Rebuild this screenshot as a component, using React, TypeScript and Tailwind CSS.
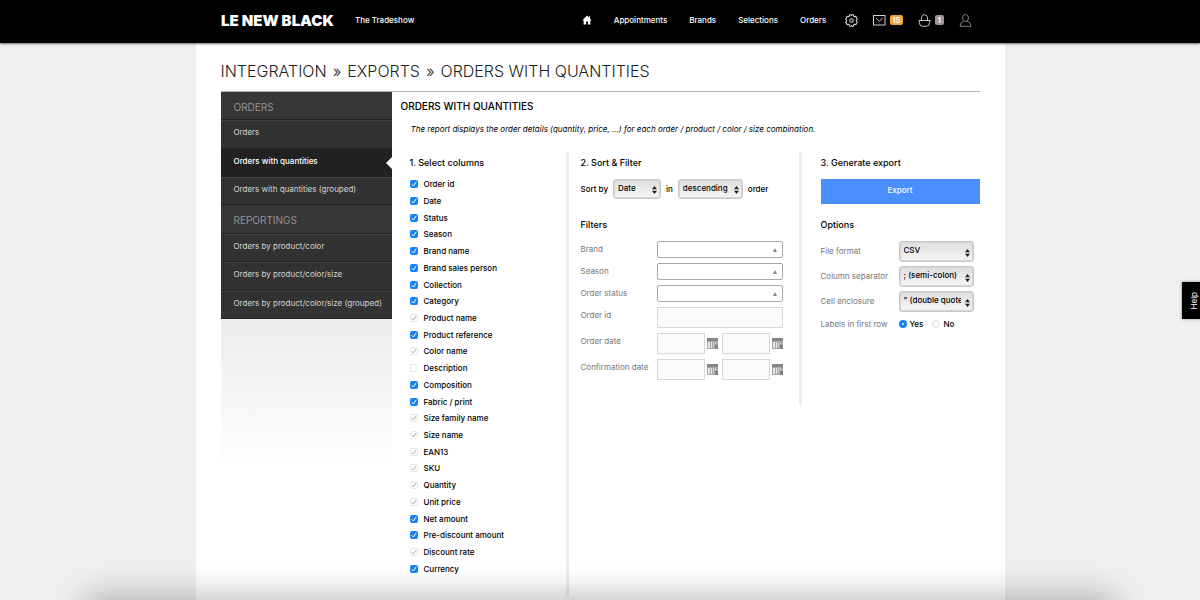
import type { ReactNode } from "react";

type Column = { label: string; state: "on" | "off" | "locked" };

const columns: Column[] = [
  { label: "Order id", state: "on" },
  { label: "Date", state: "on" },
  { label: "Status", state: "on" },
  { label: "Season", state: "on" },
  { label: "Brand name", state: "on" },
  { label: "Brand sales person", state: "on" },
  { label: "Collection", state: "on" },
  { label: "Category", state: "on" },
  { label: "Product name", state: "locked" },
  { label: "Product reference", state: "on" },
  { label: "Color name", state: "locked" },
  { label: "Description", state: "off" },
  { label: "Composition", state: "on" },
  { label: "Fabric / print", state: "on" },
  { label: "Size family name", state: "locked" },
  { label: "Size name", state: "locked" },
  { label: "EAN13", state: "locked" },
  { label: "SKU", state: "locked" },
  { label: "Quantity", state: "locked" },
  { label: "Unit price", state: "locked" },
  { label: "Net amount", state: "on" },
  { label: "Pre-discount amount", state: "on" },
  { label: "Discount rate", state: "locked" },
  { label: "Currency", state: "on" },
];

function HomeIcon() {
  return (
    <svg viewBox="0 0 10 10" className="h-[10px] w-[10px]" fill="#fff" aria-hidden="true">
      <path d="M5 .6 .4 5.2h1.2v4.2h2.5V6.6h1.8v2.8h2.5V5.2h1.2L8 3.6V1.2H6.9v1.3z" />
    </svg>
  );
}

function GearIcon() {
  return (
    <svg viewBox="0 0 24 24" className="h-[13px] w-[13px]" fill="none" stroke="#d0d0d0" strokeWidth="2" strokeLinejoin="round" aria-hidden="true">
      <circle cx="12" cy="12" r="3.2" />
      <path d="M8.500 1.500h2.300q1.200 2.500 2.400 0h2.300l1.200 3.500 3.300-.6 2.700 4.700-2 2.900 2 2.900-2.700 4.700-3.300-.6-1.200 3.500h-2.300q-1.200-2.500-2.400 0H8.500L7.300 19l-3.300.6-2.700-4.700 2-2.900-2-2.900L4 4.400l3.300.6z" />
    </svg>
  );
}

function MailIcon() {
  return (
    <svg viewBox="0 0 13 11" className="h-[11px] w-[13px]" fill="none" stroke="#d0d0d0" aria-hidden="true">
      <rect x=".5" y=".5" width="11.500" height="9.500" />
      <path d="M3 3l3.300 3.400L9.600 3" />
    </svg>
  );
}

function BasketIcon() {
  return (
    <svg viewBox="0 0 13 13" className="h-[13px] w-[13px]" fill="none" stroke="#c4c4c4" aria-hidden="true">
      <path d="M.5 6.500h12M1.300 6.500v2q0 3.800 3.500 3.800h3.400q3.500 0 3.500-3.800v-2" />
      <path d="M3.300 6.500q0-5.800 3.200-5.800t3.200 5.800" />
    </svg>
  );
}

function UserIcon() {
  return (
    <svg viewBox="0 0 13 13" className="h-[13px] w-[13px]" fill="none" stroke="#7d7d7d" aria-hidden="true">
      <ellipse cx="6.500" cy="4" rx="3" ry="3.500" />
      <path d="M4.600 7.500Q1 8.200 1 12.300h11Q12 8.200 8.400 7.500" />
    </svg>
  );
}

function CalendarIcon() {
  return (
    <svg viewBox="0 0 11 11" className="h-[11px] w-[11px]" aria-hidden="true">
      <rect x="0" y="0" width="11" height="11" fill="#a8a8a8" />
      <rect x="0" y="0" width="11" height="3" fill="#858585" />
      <path d="M1 4h2v6H1zM4 4h1v6H4z" fill="#e6e6e6" />
      <path d="M6 4h1v5H6zM8 4h1v2H8z" fill="#cfcfcf" />
      <rect x="8" y="7" width="3" height="4" fill="#808080" />
    </svg>
  );
}

function NavLink({ children }: { children: ReactNode }) {
  return <a href="#" className="text-[8px] leading-4 font-medium text-white">{children}</a>;
}

function SideSection({ title, items, active }: { title: string; items: string[]; active?: string }) {
  return (
    <>
      <h2 className="flex items-center border-b border-[#242424] bg-[#373737] pt-0.5 pl-[13px] text-[10px] leading-4 text-[#929292]">{title}</h2>
      {items.map((item) => (
        <a
          key={item}
          href="#"
          className={
            item === active
              ? "relative flex items-center bg-[#212121] pb-1 pl-[13px] text-[8px] leading-4 font-medium text-white"
              : "flex items-center border-t border-b border-t-[#434343] border-b-[#242424] bg-[#323232] pb-1 pl-[13px] text-[8px] leading-4 whitespace-nowrap text-[#d2d2d2]"
          }
        >
          {item}
          {item === active && (
            <svg viewBox="0 0 6 12" className="absolute top-2 right-0 h-3 w-1.5" fill="#fff" aria-hidden="true">
              <path d="M6 0v12L0 6z" />
            </svg>
          )}
        </a>
      ))}
    </>
  );
}

function Check({ column, id }: { column: Column; id: string }) {
  const on = column.state === "on";
  return (
    <div className="flex items-center gap-1.5">
      <span className="grid size-2 shrink-0 place-items-center">
        <input
          id={id}
          type="checkbox"
          defaultChecked={column.state !== "off"}
          disabled={column.state === "locked"}
          className={
            on
              ? "size-2 appearance-none rounded-xs bg-[#1584fb] [grid-area:1/1]"
              : "size-2 appearance-none rounded-xs border border-[#e8e8e8] bg-white [grid-area:1/1]"
          }
        />
        {column.state !== "off" && (
          <svg viewBox="0 0 8 8" className="pointer-events-none size-2 [grid-area:1/1]" fill="none" stroke={on ? "#fff" : "#aaa"} aria-hidden="true">
            <path d="M1.800 4.300l1.600 1.700L6.200 1.800" />
          </svg>
        )}
      </span>
      <label htmlFor={id} className="text-[8px] leading-4 font-medium">{column.label}</label>
    </div>
  );
}

function Select({ id, label, options, width, height }: { id: string; label: string; options: string[]; width: string; height: string }) {
  return (
    <span className={`grid items-center ${width}`}>
      <select
        id={id}
        aria-label={label}
        className={`w-full appearance-none rounded-[3px] border border-[#c8c8c8] bg-linear-to-b from-[#dedede] to-[#f6f6f6] pr-3 pb-[3px] pl-1 text-[8px] font-medium text-black shadow-[inset_0_0_1px_1px_#d4d4d4] [grid-area:1/1] ${height}`}
      >
        {options.map((option) => (
          <option key={option}>{option}</option>
        ))}
      </select>
      <svg viewBox="0 0 5 8" className="pointer-events-none mt-0.5 mr-1 h-2 w-[5px] justify-self-end [grid-area:1/1]" fill="#222" aria-hidden="true">
        <path d="M2.500 0 5 3.300H0zM2.500 8 0 4.700h5z" />
      </svg>
    </span>
  );
}

function FilterSelect({ id, label }: { id: string; label: string }) {
  return (
    <div className="flex items-start">
      <label htmlFor={id} className="w-[76px] text-[8px] leading-4 text-[#777]">{label}</label>
      <span className="grid flex-1 items-center">
        <select id={id} className="h-[17px] w-full appearance-none rounded-xs border border-[#aaa] bg-white text-[8px] [grid-area:1/1]">
          <option></option>
        </select>
        <svg viewBox="0 0 4 4" className="pointer-events-none mr-1.5 size-1 justify-self-end [grid-area:1/1]" fill="#888" aria-hidden="true">
          <path d="M2 0l2 4H0z" />
        </svg>
      </span>
    </div>
  );
}

function DateRange({ id, label }: { id: string; label: string }) {
  const field = "h-[21px] w-12 border border-[#d8d8d8] bg-[#fbfbfb] px-1 text-[8px]";
  return (
    <div className="flex items-start">
      <label htmlFor={id} className="w-[76px] text-[8px] leading-4 whitespace-nowrap text-[#777]">{label}</label>
      <div className="flex flex-1 justify-between">
        <div className="flex items-center gap-0.5">
          <input id={id} type="text" className={field} />
          <button type="button" aria-label={`${label}: pick start`}><CalendarIcon /></button>
        </div>
        <div className="flex items-center gap-0.5">
          <input type="text" aria-label={`${label}: end`} className={field} />
          <button type="button" aria-label={`${label}: pick end`}><CalendarIcon /></button>
        </div>
      </div>
    </div>
  );
}

function Option({ id, label, options }: { id: string; label: string; options: string[] }) {
  return (
    <div className="flex items-start">
      <label htmlFor={id} className="w-[78px] text-[8px] leading-5 whitespace-nowrap text-[#777]">{label}</label>
      <Select id={id} label={label} options={options} width="w-[75px]" height="h-[21px]" />
    </div>
  );
}

function Radio({ id, label, checked }: { id: string; label: string; checked?: boolean }) {
  return (
    <span className="flex items-center gap-[3px]">
      <input
        id={id}
        name="labels"
        type="radio"
        defaultChecked={checked}
        className="size-2 appearance-none rounded-full border border-[#ddd] bg-white checked:border-[3px] checked:border-[#1584fb]"
      />
      <label htmlFor={id} className="text-[8px] leading-4 font-medium">{label}</label>
    </span>
  );
}

export default function App() {
  const heading = "text-[9px] leading-4 font-medium";
  return (
    <div className="relative h-screen overflow-hidden bg-[#efefef] font-['Inter','Liberation_Sans',sans-serif] text-black">
      <header className="relative bg-black shadow-[0_1px_2px_#0008]">
        <div className="mx-auto flex h-[43px] max-w-[758px] items-center pr-[7px] pb-[3px]">
          <a href="#" className="pt-0.5 text-[15px] leading-5 font-black text-white">LE NEW BLACK</a>
          <a href="#" className="ml-[21px] text-[8px] leading-4 font-medium text-white">The Tradeshow</a>
          <nav className="ml-auto flex items-center">
            <div className="flex items-center gap-[22px]">
              <a href="#" aria-label="Home"><HomeIcon /></a>
              <NavLink>Appointments</NavLink>
              <NavLink>Brands</NavLink>
              <NavLink>Selections</NavLink>
              <NavLink>Orders</NavLink>
            </div>
            <a href="#" aria-label="Settings" className="ml-[19px]"><GearIcon /></a>
            <a href="#" aria-label="Messages" className="ml-[15px] flex items-center gap-1">
              <MailIcon />
              <span className="rounded-xs bg-[#eda73d] px-[2px] text-[8px] leading-[10px] font-semibold text-white">15</span>
            </a>
            <a href="#" aria-label="Basket" className="ml-[15px] flex items-center gap-1">
              <BasketIcon />
              <span className="rounded-xs bg-[#999] px-[3px] text-[8px] leading-[10px] font-semibold text-white">1</span>
            </a>
            <a href="#" aria-label="Account" className="ml-[15px]"><UserIcon /></a>
          </nav>
        </div>
      </header>

      <main className="mx-auto h-full max-w-[809px] bg-white px-[25px] pt-4">
        <h1 className="flex gap-1.5 border-b border-[#b5b5b5] pb-2 text-[16px] leading-6 font-light text-[#222]">
          <span>INTEGRATION</span>
          <span>»</span>
          <span>EXPORTS</span>
          <span>»</span>
          <span>ORDERS WITH QUANTITIES</span>
        </h1>
        <div className="flex items-start">
          <aside className="w-[171px] shrink-0">
            <nav>
              <div className="grid h-[113px] auto-rows-fr">
                <SideSection title="ORDERS" items={["Orders", "Orders with quantities", "Orders with quantities (grouped)"]} active="Orders with quantities" />
              </div>
              <div className="grid h-[114px] auto-rows-fr">
                <SideSection title="REPORTINGS" items={["Orders by product/color", "Orders by product/color/size", "Orders by product/color/size (grouped)"]} />
              </div>
            </nav>
            <div className="h-[150px] bg-linear-to-b from-[#ececec] to-white" />
          </aside>

          <section className="flex-1 pt-1.5 pl-[9px]">
            <h2 className="text-[10px] leading-4 font-medium">ORDERS WITH QUANTITIES</h2>
            <p className="mt-[7px] pl-2.5 text-[8px] leading-4 italic">
              The report displays the order details (quantity, price, ...) for each order / product / color / size combination.
            </p>
            <form className="mt-[15px] flex items-start pl-[9px]" onSubmit={(event) => event.preventDefault()}>
              <div className="w-[159px] border-r-[3px] border-[#eee] pt-[3px] pb-5">
                <h3 className={heading}>1. Select columns</h3>
                <div className="mt-[5px] grid h-[401px] auto-rows-fr">
                  {columns.map((column, index) => (
                    <Check key={column.label} column={column} id={`column-${index}`} />
                  ))}
                </div>
              </div>

              <div className="h-[253px] w-[233px] border-r-[3px] border-[#eee] pt-[3px] pr-4 pl-3">
                <h3 className={heading}>2. Sort &amp; Filter</h3>
                <div className="mt-2 flex items-center gap-[5px] text-[8px] leading-4 font-medium">
                  <label htmlFor="sort">Sort by</label>
                  <Select id="sort" label="Sort by" options={["Date", "Status", "Season"]} width="w-12" height="h-5" />
                  <label htmlFor="direction">in</label>
                  <Select id="direction" label="Sort direction" options={["descending", "ascending"]} width="w-[65px]" height="h-5" />
                  <span>order</span>
                </div>
                <h3 className={`mt-[18px] ${heading}`}>Filters</h3>
                <div className="mt-2 flex flex-col gap-[5px]">
                  <FilterSelect id="brand" label="Brand" />
                  <FilterSelect id="season" label="Season" />
                  <FilterSelect id="status" label="Order status" />
                  <div className="flex items-start">
                    <label htmlFor="order-id" className="w-[76px] text-[8px] leading-4 text-[#777]">Order id</label>
                    <input id="order-id" type="text" className="h-[21px] min-w-0 flex-1 border border-[#d8d8d8] bg-[#fbfbfb] px-1 text-[8px]" />
                  </div>
                  <DateRange id="order-date" label="Order date" />
                  <DateRange id="confirmation-date" label="Confirmation date" />
                </div>
              </div>

              <div className="flex-1 pt-[3px] pl-[19px]">
                <h3 className={heading}>3. Generate export</h3>
                <button type="submit" className="mt-2 block h-[25px] w-full bg-[#4b8fff] pb-1 text-[8px] leading-4 font-medium text-white">Export</button>
                <h3 className={`mt-[13px] ${heading}`}>Options</h3>
                <div className="mt-2 flex flex-col gap-1">
                  <Option id="format" label="File format" options={["CSV", "XLS"]} />
                  <Option id="separator" label="Column separator" options={["; (semi-colon)", ", (comma)"]} />
                  <Option id="enclosure" label="Cell enclosure" options={['" (double quote)', "' (single quote)"]} />
                  <div className="flex items-center">
                    <span className="w-[78px] text-[8px] leading-4 text-[#777]">Labels in first row</span>
                    <div className="flex gap-[9px]">
                      <Radio id="labels-yes" label="Yes" checked />
                      <Radio id="labels-no" label="No" />
                    </div>
                  </div>
                </div>
              </div>
            </form>
          </section>
        </div>
      </main>

      <button type="button" className="absolute top-[282px] right-0 flex h-[37px] w-[18px] items-center justify-center bg-black pl-1.5 text-[8px] text-white shadow-[0_0_3px_#0006]">
        <span className="rotate-180 [writing-mode:vertical-rl]">Help</span>
      </button>
      <div className="pointer-events-none absolute inset-x-24 -bottom-4 h-2 shadow-[0_0_34px_10px_#0005]" />
    </div>
  );
}
